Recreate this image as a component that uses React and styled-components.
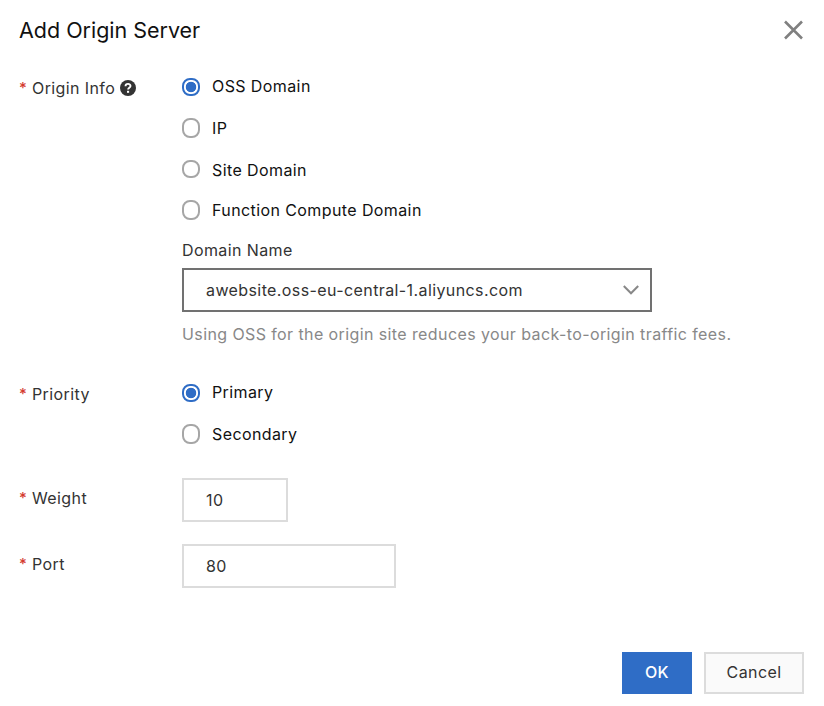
import React, { useState } from "react";
import styled, { createGlobalStyle } from "styled-components";

const GlobalStyle = createGlobalStyle`
  * { box-sizing: border-box; }
  body {
    margin: 0;
    background: #fff;
    color: #333;
    font: 16px/20px Inter, "Liberation Sans", sans-serif;
    letter-spacing: 0.4px;
  }
`;

const Dialog = styled.form`
  width: 824px;
  height: 706px;
  padding: 18px 20px 12px 19px;
  display: flex;
  flex-direction: column;
`;

const Header = styled.header`
  display: flex;
  justify-content: space-between;
  height: 58px;
`;

const Title = styled.h1`
  margin: -1px 0 0;
  font-size: 21.5px;
  line-height: 26px;
  font-weight: 400;
  letter-spacing: -0.02px;
  color: #111;
`;

const CloseButton = styled.button`
  width: 20px;
  height: 20px;
  margin: 2px 1px 0 0;
  padding: 0;
  border: 0;
  background: none;
  color: #808080;
  svg { display: block; }
`;

const Field = styled.div`
  display: grid;
  grid-template-columns: 163px 1fr;
  height: ${(p) => p.$height}px;
`;

const Label = styled.div`
  display: flex;
  height: 20px;
  margin-top: ${(p) => p.$top}px;
  white-space: nowrap;
  svg { margin: 2px 0 0 5px; }
`;

const Required = styled.span`
  width: 13px;
  flex: none;
  color: #d43a2f;
  font-size: 15px;
  font-weight: 500;
  letter-spacing: 0;
`;

const Controls = styled.div`
  display: flex;
  flex-direction: column;
  align-items: flex-start;
`;

const Option = styled.label`
  display: flex;
  align-items: center;
  height: 41px;
  gap: 12px;
  color: #111;
  white-space: nowrap;
`;

const Radio = styled.input.attrs({ type: "radio" })`
  appearance: none;
  width: 18px;
  height: ${(p) => (p.$compact ? 18 : 20)}px;
  margin: 0;
  border: 2px solid #a6a6a6;
  border-radius: 8px;
  background: #fff;
  &:checked {
    height: 18px;
    border-color: #2f6dc6;
    background: radial-gradient(circle, #2f6dc6 4.9px, #fff 5.6px);
  }
`;

const OptionText = styled.span`
  position: relative;
  top: ${(p) => p.$shift || 0}px;
`;

const OptionGroup = styled.div`
  margin-top: -10px;
  height: 174px;
`;

const SubLabel = styled.div`
  height: 28px;
  color: #333;
`;

const Select = styled.button`
  width: 470px;
  height: 44px;
  padding: 0 11px 0 22px;
  display: flex;
  align-items: center;
  justify-content: space-between;
  border: 2px solid #717171;
  background: #fff;
  color: #333;
  font: inherit;
  letter-spacing: inherit;
`;

const Hint = styled.p`
  margin: 12px 0 0;
  color: #888;
  white-space: nowrap;
`;

const TextInput = styled.input`
  width: ${(p) => p.$width}px;
  height: 44px;
  padding: 0 22px;
  border: 2px solid #dcdcdc;
  outline: 0;
  color: #333;
  font: inherit;
  letter-spacing: inherit;
`;

const Footer = styled.footer`
  margin-top: auto;
  display: flex;
  justify-content: flex-end;
  gap: 12px;
`;

const Button = styled.button`
  width: ${(p) => (p.$primary ? 70 : 100)}px;
  height: 42px;
  padding: 0 0 2px;
  border: 2px solid ${(p) => (p.$primary ? "#2f6dc6" : "#dcdcdc")};
  background: ${(p) => (p.$primary ? "#2f6dc6" : "#fafafa")};
  color: ${(p) => (p.$primary ? "#fff" : "#333")};
  font: inherit;
  font-weight: ${(p) => (p.$primary ? 500 : 400)};
  letter-spacing: inherit;
`;

const CloseIcon = () => (
  <svg width="20" height="20" viewBox="0 0 20 20" fill="none" stroke="currentColor" strokeWidth="2.6">
    <path d="M2 1.5 19 18.5M19 1.5 2 18.5" />
  </svg>
);

const HelpIcon = () => (
  <svg width="16" height="16" viewBox="0 0 16 16" fill="none">
    <circle cx="8" cy="8" r="8" fill="#333" />
    <path d="M5.5 6.2C5.6 3.1 10.5 3.2 10.5 6c0 1.7-2.4 1.8-2.4 3.5" stroke="#fff" strokeWidth="1.9" />
    <rect x="7" y="10.8" width="2.1" height="2" fill="#fff" />
  </svg>
);

const ChevronIcon = () => (
  <svg width="16" height="10" viewBox="0 0 16 10" fill="none" stroke="#888" strokeWidth="2">
    <path d="M.8 1 8 8.3 15.2 1" />
  </svg>
);

const origins = [
  { name: "OSS Domain", shift: -1 },
  { name: "IP" },
  { name: "Site Domain", shift: 1, compact: true },
  { name: "Function Compute Domain" },
];

const priorities = [
  { name: "Primary", shift: -1 },
  { name: "Secondary" },
];

function RadioOptions({ name, options }) {
  const [value, setValue] = useState(options[0].name);
  return options.map((o) => (
    <Option key={o.name}>
      <Radio
        name={name}
        $compact={o.compact}
        checked={value === o.name}
        onChange={() => setValue(o.name)}
      />
      <OptionText $shift={o.shift}>{o.name}</OptionText>
    </Option>
  ));
}

function FieldLabel({ children, top, help }) {
  return (
    <Label $top={top}>
      <Required>*</Required>
      {children}
      {help && <HelpIcon />}
    </Label>
  );
}

export default function App() {
  return (
    <>
      <GlobalStyle />
      <Dialog onSubmit={(e) => e.preventDefault()}>
        <Header>
          <Title>Add Origin Server</Title>
          <CloseButton type="button" aria-label="Close"><CloseIcon /></CloseButton>
        </Header>
        <Field $height={296}>
          <FieldLabel top={2} help>Origin Info</FieldLabel>
          <Controls>
            <OptionGroup><RadioOptions name="origin" options={origins} /></OptionGroup>
            <SubLabel>Domain Name</SubLabel>
            <Select type="button">awebsite.oss-eu-central-1.aliyuncs.com<ChevronIcon /></Select>
            <Hint>Using OSS for the origin site reduces your back-to-origin traffic fees.</Hint>
          </Controls>
        </Field>
        <Field $height={106}>
          <FieldLabel top={12}>Priority</FieldLabel>
          <Controls>
            <RadioOptions name="priority" options={priorities} />
          </Controls>
        </Field>
        <Field $height={66}>
          <FieldLabel top={10}>Weight</FieldLabel>
          <Controls><TextInput $width={106} defaultValue="10" /></Controls>
        </Field>
        <Field $height={44}>
          <FieldLabel top={10}>Port</FieldLabel>
          <Controls><TextInput $width={214} defaultValue="80" /></Controls>
        </Field>
        <Footer>
          <Button $primary type="submit">OK</Button>
          <Button type="button">Cancel</Button>
        </Footer>
      </Dialog>
    </>
  );
}
